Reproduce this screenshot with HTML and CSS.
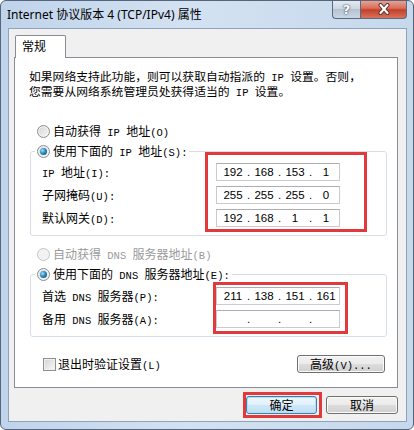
FILE: index.html
```html
<!DOCTYPE html>
<html lang="zh-CN">
<head>
    <meta charset="UTF-8">
    <meta name="viewport" content="width=device-width, initial-scale=1.0">
    <title>Internet 协议版本 4 (TCP/IPv4) 属性</title>
    <link rel="stylesheet" href="styles.css">
</head>
<body>

    <div class="window">
        <div class="titlebar">
            <span class="title">Internet 协议版本 4 (TCP/IPv4) 属性</span>
            <div class="caption">
                <span class="cap-btn help">?</span>
                <span class="cap-btn close">
                    <svg width="14" height="12" viewBox="0 0 14 12">
                        <path d="M3.5 2 L10.5 10 M10.5 2 L3.5 10" stroke="#5a2a22" stroke-width="4" stroke-linecap="round"/>
                        <path d="M3.5 2 L10.5 10 M10.5 2 L3.5 10" stroke="#fff" stroke-width="2.2" stroke-linecap="round"/>
                    </svg>
                </span>
            </div>
        </div>

        <div class="client">
            <div class="tabs"><span class="tab">常规</span></div>

            <div class="panel">
                <p class="desc">如果网络支持此功能，则可以获取自动指派的<span class="en"> IP </span>设置。否则，<br>您需要从网络系统管理员处获得适当的<span class="en"> IP </span>设置。</p>

                <div class="option"><span class="rb"></span><span class="txt">自动获得<span class="en"> IP </span>地址<span class="en">(O)</span></span></div>
                <fieldset class="group">
                    <legend class="option"><span class="rb on"></span><span class="txt">使用下面的<span class="en"> IP </span>地址<span class="en">(S):</span></span></legend>
                    <div class="rows">
                        <div class="labels">
                            <span><span class="en">IP </span>地址<span class="en">(I):</span></span>
                            <span>子网掩码<span class="en">(U):</span></span>
                            <span>默认网关<span class="en">(D):</span></span>
                        </div>
                        <div class="fields mark-ip">
                            <div class="ip"><span>192</span><i>.</i><span>168</span><i>.</i><span>153</span><i>.</i><span>1</span></div>
                            <div class="ip"><span>255</span><i>.</i><span>255</span><i>.</i><span>255</span><i>.</i><span>0</span></div>
                            <div class="ip"><span>192</span><i>.</i><span>168</span><i>.</i><span>1</span><i>.</i><span>1</span></div>
                        </div>
                    </div>
                </fieldset>

                <div class="option disabled gap"><span class="rb off"></span><span class="txt">自动获得<span class="en"> DNS </span>服务器地址<span class="en">(B)</span></span></div>
                <fieldset class="group">
                    <legend class="option"><span class="rb on"></span><span class="txt">使用下面的<span class="en"> DNS </span>服务器地址<span class="en">(E):</span></span></legend>
                    <div class="rows dns">
                        <div class="labels">
                            <span>首选<span class="en"> DNS </span>服务器<span class="en">(P):</span></span>
                            <span>备用<span class="en"> DNS </span>服务器<span class="en">(A):</span></span>
                        </div>
                        <div class="fields mark-dns">
                            <div class="ip"><span>211</span><i>.</i><span>138</span><i>.</i><span>151</span><i>.</i><span>161</span></div>
                            <div class="ip"><span></span><i>.</i><span></span><i>.</i><span></span><i>.</i><span></span></div>
                        </div>
                    </div>
                </fieldset>

                <div class="bottom-row">
                    <div class="check"><span class="cb"></span><span class="txt">退出时验证设置<span class="en">(L)</span></span></div>
                    <span class="btn wide">高级<span class="en">(V)...</span></span>
                </div>
            </div>

            <div class="actions">
                <span class="btn default mark-ok">确定</span>
                <span class="btn">取消</span>
            </div>
        </div>
    </div>

</body>
</html>
```

FILE: styles.css
```css
body {
    margin: 0;
    font-family: "Noto Sans CJK SC", sans-serif;
    font-size: 12px;
    color: #000;
    background: #fff;
}
.en {
    font-family: "Liberation Mono", monospace;
    font-size: 10.5px;
    line-height: 1;
    white-space: pre;
}
.window {
    width: 414px;
    height: 430px;
    box-sizing: border-box;
    border: 1px solid #56657a;
    border-radius: 6px;
    background: linear-gradient(90deg, #bfd3ea, #d3e2f2 45%, #c6d8ec);
    display: flex;
    flex-direction: column;
    overflow: hidden;
}
.titlebar {
    height: 27px;
    flex-shrink: 0;
    display: flex;
    justify-content: space-between;
    align-items: flex-start;
    padding-left: 6px;
}
.title {
    margin-top: 6px;
    line-height: 16px;
    font-family: "Noto Sans", "Noto Sans CJK SC", sans-serif;
    font-size: 12px;
}
.caption {
    display: flex;
    margin-top: -1px;
    margin-right: 6px;
}
.cap-btn {
    height: 19px;
    box-sizing: border-box;
    border: 1px solid #5b6a7e;
    border-top: none;
    display: flex;
    align-items: center;
    justify-content: center;
}
.help {
    width: 28px;
    border-right: none;
    border-radius: 0 0 0 4px;
    background: linear-gradient(#e6ecf3, #cbd6e2 50%, #b3c2d3 51%, #c9d6e4);
    color: #fff;
    font-family: "DejaVu Sans", sans-serif;
    font-weight: bold;
    font-size: 13px;
    text-shadow: 0 0 2px #3d4a5c, 0 0 1px #3d4a5c;
}
.close {
    width: 47px;
    border-radius: 0 0 4px 0;
    background: linear-gradient(#eaa89b, #d86f5c 45%, #c2402a 55%, #d8735c);
}
.client {
    flex: 1;
    margin: 0 6px 7px 7px;
    background: #f0f0f0;
    border: 1px solid #8ea2ba;
    display: flex;
    flex-direction: column;
}
.tabs {
    padding: 6px 0 0 6px;
    display: flex;
}
.tab {
    position: relative;
    z-index: 1;
    width: 51px;
    height: 23px;
    box-sizing: border-box;
    margin-bottom: -1px;
    border: 1px solid #898c95;
    border-bottom: none;
    border-radius: 2px 2px 0 0;
    background: #fff;
    padding-left: 6px;
    line-height: 20px;
}
.panel {
    flex: 1;
    margin: 0 8px 0 5px;
    background: #fff;
    border: 1px solid #898c95;
    padding: 11px 10px 0 14px;
}
.desc {
    margin: 0;
    font-size: 11.8px;
    line-height: 13px;
    height: 26px;
}
.option {
    display: flex;
    align-items: center;
    height: 16px;
    margin-left: 8px;
    margin-top: 28px;
}
.txt {
    line-height: 16px;
}
.option.gap {
    margin-top: 10px;
}
.option.disabled {
    color: #9a9a9a;
}
.rb {
    width: 13px;
    height: 13px;
    box-sizing: border-box;
    border-radius: 50%;
    border: 1px solid #8a8c8e;
    background: linear-gradient(135deg, #d4d4d4, #f8f8f8);
    box-shadow: inset 0 0 0 1px #f4f4f4;
    margin-right: 3px;
    position: relative;
}
.rb.on::after {
    content: "";
    position: absolute;
    left: 2px;
    top: 2px;
    width: 7px;
    height: 7px;
    border-radius: 50%;
    background: radial-gradient(circle at 35% 35%, #9fe0f8, #2a8cc0 45%, #0c3f6a);
}
.rb.off {
    border-color: #c2c4c6;
    background: #f2f2f2;
}
.group {
    margin: 4px 0 0 1px;
    padding: 4px 10px 8px 4px;
    border: 1px solid #d5dfe5;
    border-radius: 3px;
}
.group legend.option {
    margin: 0;
    padding: 0 2px;
}
.rows {
    display: flex;
    padding-left: 7px;
}
.rows.dns {
    padding-top: 1px;
}
.labels {
    width: 174px;
    display: flex;
    flex-direction: column;
    gap: 5px;
}
.labels > span {
    height: 18px;
    line-height: 18px;
}
.fields {
    width: 124px;
    display: flex;
    flex-direction: column;
    gap: 5px;
    position: relative;
}
.ip {
    height: 18px;
    box-sizing: border-box;
    border: 1px solid #c9cbd0;
    border-top-color: #abadb3;
    background: #fff;
    display: flex;
    padding-left: 4px;
    font-family: "Liberation Sans", sans-serif;
    font-size: 11.5px;
    line-height: 16px;
}
.ip span {
    width: 24px;
    text-align: center;
}
.ip i {
    width: 7px;
    font-style: normal;
    text-align: center;
}
.mark-ip::after,
.mark-dns::after,
.mark-ok::after {
    content: "";
    position: absolute;
    border: 3px solid #e2393d;
}
.mark-ip::after {
    left: -11px;
    right: -27px;
    top: -11px;
    bottom: -5px;
}
.mark-dns::after {
    left: -3px;
    right: -8px;
    top: -5px;
    bottom: -6px;
}
.bottom-row {
    display: flex;
    align-items: center;
    justify-content: space-between;
    height: 18px;
    margin: 18px 2px 0 14px;
}
.check {
    display: flex;
    align-items: center;
}
.cb {
    width: 13px;
    height: 13px;
    box-sizing: border-box;
    border: 1px solid #8e8f8f;
    background: linear-gradient(135deg, #d2d2d2, #fafafa);
    box-shadow: inset 0 0 0 1px #f0f0f0;
    margin-right: 2px;
}
.btn {
    width: 72px;
    height: 18px;
    box-sizing: border-box;
    border: 1px solid #707070;
    border-radius: 3px;
    background: linear-gradient(#f2f2f2, #ebebeb 50%, #dddddd 51%, #cfcfcf);
    box-shadow: inset 0 0 0 1px #fbfbfb;
    text-align: center;
    line-height: 16px;
    position: relative;
}
.btn.wide {
    width: 88px;
}
.btn.default {
    width: 71px;
    border-color: #3c7fb1;
    background: linear-gradient(#eef7fd, #e0f1fb 50%, #cfe8f7 51%, #bddff2);
    box-shadow: inset 0 0 0 1px #aee0f7;
}
.mark-ok::after {
    left: -4px;
    right: -6px;
    top: -5px;
    bottom: -5px;
}
.actions {
    display: flex;
    justify-content: flex-end;
    gap: 9px;
    padding: 8px 8px 7px 0;
}
```
